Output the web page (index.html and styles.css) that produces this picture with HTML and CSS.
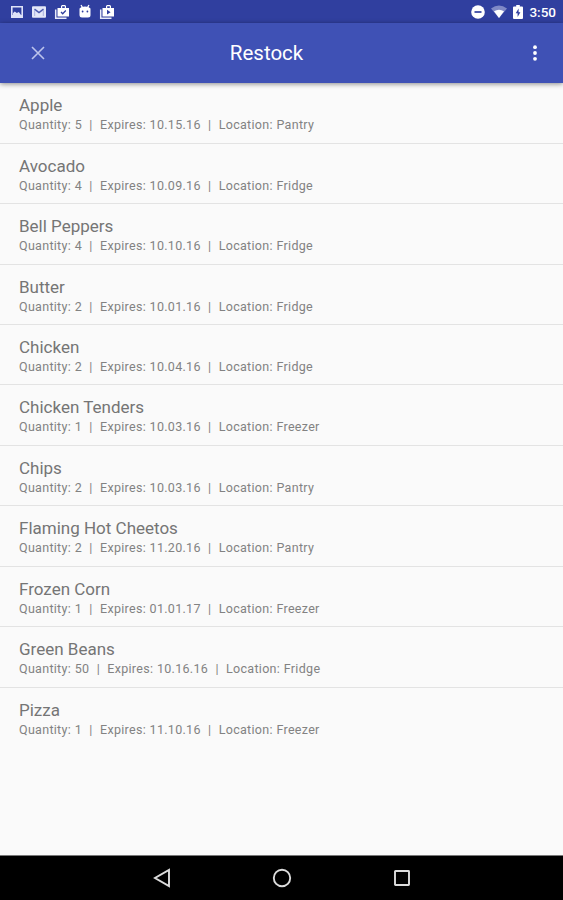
FILE: index.html
```html
<!DOCTYPE html>
<html lang="en">
<head>
    <meta charset="UTF-8">
    <meta name="viewport" content="width=device-width, initial-scale=1.0">
    <title>Restock</title>
    <link rel="stylesheet" href="styles.css">
</head>
<body>
    <div class="status-bar">
        <div class="notifications">
            <!-- picture -->
            <svg width="14" height="14" viewBox="0 0 14 14"><path fill="#dfe3f8" fill-rule="evenodd" d="M1 1h12v12H1zM2.600 2.600v7.400h8.800V2.600z"/><path fill="#dfe3f8" d="M3 10.400V8l1.800-1.500 2 1.500 2-1 2.600 3.400z"/></svg>
            <!-- mail -->
            <svg width="16" height="14" viewBox="0 0 16 14"><rect x="1" y="1.300" width="14" height="11.500" rx="1" fill="#e4e7f8"/><path d="M3.500 4.200L8 7.500l4.500-3.300" fill="none" stroke="#4a58ae" stroke-width="1.500"/><path d="M3.700 5v6M12.300 5v6" stroke="#aab2df"/></svg>
            <!-- briefcase with check -->
            <svg width="16" height="16" viewBox="0 0 16 16"><path fill="none" stroke="#e8ebfa" stroke-width="1.500" d="M1.700 5.500v8.700h10.800"/><path fill="#fff" fill-rule="evenodd" d="M3.500 4H7V2l1-1h3l1 1v2h3v8.500H3.500zM8.200 2.300V4h2.600V2.300z"/><path fill="none" stroke="#303f9f" stroke-width="1.300" d="M7 8l1.700 1.700L11.800 6.500"/></svg>
            <!-- android head -->
            <svg width="14" height="15" viewBox="0 0 14 15"><path stroke="#fff" stroke-width="1.300" d="M3 1l1.500 2.500M11 1L9.500 3.500"/><path fill="#fff" d="M1.500 4.500Q3 2.500 7 2.500t5.500 2V11q0 2.500-2.500 2.500H4Q1.500 13.500 1.500 11z"/><circle cx="4.600" cy="7.500" r=".9" fill="#303f9f"/><circle cx="9.400" cy="7.500" r=".9" fill="#303f9f"/></svg>
            <!-- briefcase with play -->
            <svg width="16" height="16" viewBox="0 0 16 16"><path fill="none" stroke="#e8ebfa" stroke-width="1.500" d="M1.700 5.500v8.700h10.800"/><path fill="#fff" fill-rule="evenodd" d="M3.500 4H7V2l1-1h3l1 1v2h3v8.500H3.500zM8.200 2.300V4h2.600V2.300z"/><path fill="#303f9f" d="M8 5.800v4.800l3.600-2.400z"/></svg>
        </div>
        <div class="system">
            <!-- do not disturb -->
            <svg width="14" height="14" viewBox="0 0 14 14"><circle cx="7" cy="7" r="6.800" fill="#fff"/><path stroke="#303f9f" stroke-width="1.700" d="M3.500 7h7"/></svg>
            <!-- wifi -->
            <svg width="16" height="13" viewBox="0 0 16 13"><path fill="#8089c6" d="M0 3.500Q8-2.500 16 3.500L8 13z"/><path fill="#fff" d="M3 6.300q5-3 10 0L8 13z"/></svg>
            <!-- battery -->
            <svg width="10" height="14" viewBox="0 0 10 14"><path fill="#fff" d="M3.200 0h3.600v1.500H9q1 0 1 1V13q0 1-1 1H1q-1 0-1-1V2.500q0-1 1-1h2.200z"/><path fill="#303f9f" d="M5.600 3.500L2.700 8.300h1.900V12l2.800-4.800H5.600z"/></svg>
            <span class="clock">3:50</span>
        </div>
    </div>

    <div class="app-bar">
        <svg class="close" width="14" height="14" viewBox="0 0 14 14"><path stroke="#bcc4ec" stroke-width="1.600" d="M1 1l12 12M13 1L1 13"/></svg>
        <h1>Restock</h1>
        <svg class="more" width="4" height="16" viewBox="0 0 4 16"><circle cx="2" cy="2.200" r="1.900" fill="#fff"/><circle cx="2" cy="8" r="1.900" fill="#fff"/><circle cx="2" cy="13.800" r="1.900" fill="#fff"/></svg>
    </div>

    <ul class="items">
        <li><h2>Apple</h2><p>Quantity: 5  |  Expires: 10.15.16  |  Location: Pantry</p></li>
        <li><h2>Avocado</h2><p>Quantity: 4  |  Expires: 10.09.16  |  Location: Fridge</p></li>
        <li><h2>Bell Peppers</h2><p>Quantity: 4  |  Expires: 10.10.16  |  Location: Fridge</p></li>
        <li><h2>Butter</h2><p>Quantity: 2  |  Expires: 10.01.16  |  Location: Fridge</p></li>
        <li><h2>Chicken</h2><p>Quantity: 2  |  Expires: 10.04.16  |  Location: Fridge</p></li>
        <li><h2>Chicken Tenders</h2><p>Quantity: 1  |  Expires: 10.03.16  |  Location: Freezer</p></li>
        <li><h2>Chips</h2><p>Quantity: 2  |  Expires: 10.03.16  |  Location: Pantry</p></li>
        <li><h2>Flaming Hot Cheetos</h2><p>Quantity: 2  |  Expires: 11.20.16  |  Location: Pantry</p></li>
        <li><h2>Frozen Corn</h2><p>Quantity: 1  |  Expires: 01.01.17  |  Location: Freezer</p></li>
        <li><h2>Green Beans</h2><p>Quantity: 50  |  Expires: 10.16.16  |  Location: Fridge</p></li>
        <li><h2>Pizza</h2><p>Quantity: 1  |  Expires: 11.10.16  |  Location: Freezer</p></li>
    </ul>

    <div class="nav-bar">
        <svg width="20" height="20" viewBox="0 0 20 20"><path d="M17 2v16L3 10z"/></svg>
        <svg width="20" height="20" viewBox="0 0 20 20"><circle cx="10" cy="10" r="8.200"/></svg>
        <svg width="20" height="20" viewBox="0 0 20 20"><rect x="3" y="3" width="14" height="14" rx=".5"/></svg>
    </div>
</body>
</html>
```
FILE: styles.css
```css
*{
    box-sizing: border-box;
}
body{
    margin: 0;
    height: 100vh;
    display: flex;
    flex-direction: column;
    overflow: hidden;
    font-family: Roboto, "Liberation Sans", sans-serif;
    background-color: #fafafa;
}
h1,h2,p,ul{
    margin: 0;
    padding: 0;
    font-weight: 400;
}
svg{
    display: block;
    flex: none;
}
.status-bar{
    display: flex;
    flex: none;
    justify-content: space-between;
    align-items: center;
    height: 23px;
    padding: 0 7px 0 10px;
    background-color: #303f9f;
}
.notifications,.system{
    display: flex;
    align-items: center;
}
.notifications{
    gap: 7.200px;
}
.system{
    gap: 6px;
}
.clock{
    font-size: 13.500px;
    font-weight: 500;
    line-height: 23px;
    color: #fff;
    padding-top: 2px;
}
.app-bar{
    display: grid;
    flex: none;
    grid-template-columns: 60px 1fr 90px;
    align-items: center;
    height: 60px;
    background-color: #3f51b5;
    box-shadow: 0 1px 5px rgba(0, 0, 0, .45);
}
.app-bar h1{
    font-size: 20.500px;
    text-align: center;
    color: #fff;
}
.close{
    margin-left: 31px;
}
.more{
    margin-left: 60px;
}
.items{
    flex: 1;
    list-style: none;
    padding-top: .300px;
}
.items li{
    height: 60.450px;
    padding: 12px 19px 0;
    border-bottom: 1px solid #e3e3e3;
}
.items li:last-child{
    border-bottom: none;
}
.items h2{
    font-size: 17px;
    line-height: 20px;
    color: #757575;
}
.items p{
    font-size: 12.500px;
    line-height: 20.500px;
    letter-spacing: .3px;
    word-spacing: .25px;
    white-space: pre;
    color: #828282;
}
.nav-bar{
    display: flex;
    flex: none;
    justify-content: center;
    align-items: center;
    gap: 100px;
    height: 45px;
    border-top: 1px solid #777;
    background-color: #000;
}
.nav-bar svg{
    fill: none;
    stroke: #dcdcdc;
    stroke-width: 1.900;
}
```
